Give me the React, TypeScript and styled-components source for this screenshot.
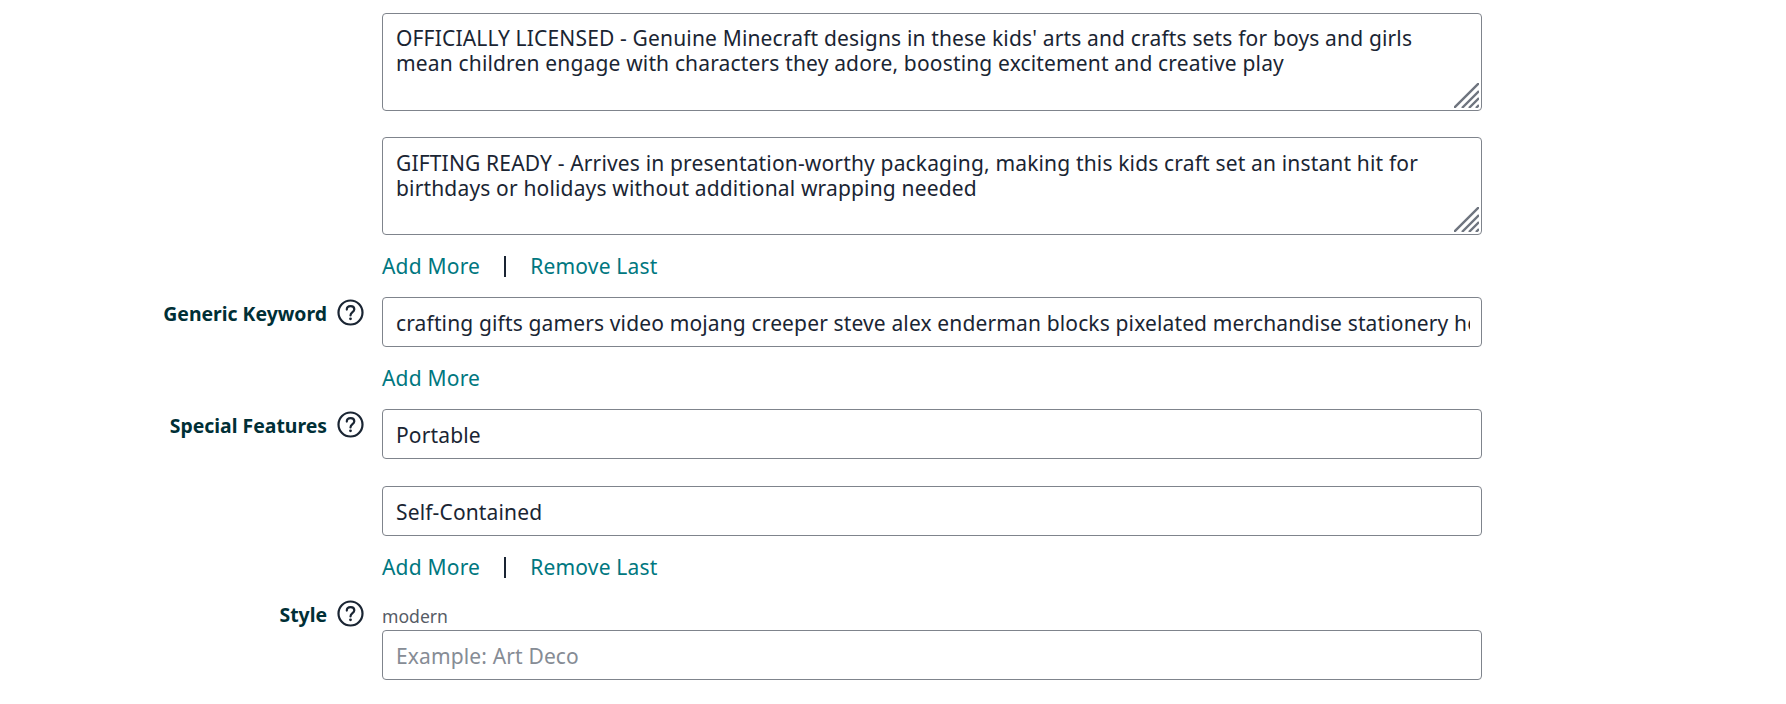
import React from "react";
import styled, { createGlobalStyle } from "styled-components";

const FONT = `"Noto Sans", "Open Sans", sans-serif`;

const Global = createGlobalStyle`
  html, body { margin: 0; padding: 0; background: #fff; }
  body { font-family: ${FONT}; color: #1a2533; }
`;

const Page = styled.main`
  display: flex;
  flex-direction: column;
  width: 1786px;
  height: 704px;
  padding-top: 13px;
  box-sizing: border-box;
  overflow: hidden;
`;

const Row = styled.section`
  display: grid;
  grid-template-columns: 364px 1100px;
  column-gap: 18px;
  align-items: start;
`;

const LabelCell = styled.div<{ $top?: number }>`
  display: flex;
  justify-content: flex-end;
  align-items: center;
  gap: 10px;
  height: 28px;
  margin-top: ${(p) => p.$top ?? 1}px;
  font-size: 19.4px;
  font-weight: 700;
  color: #002f36;
`;

const LabelText = styled.span`
  margin-top: 3px;
  line-height: 26px;
`;

const Fields = styled.div`
  display: flex;
  flex-direction: column;
`;

const AreaWrap = styled.div<{ $gap?: number }>`
  position: relative;
  height: 98px;
  margin-bottom: ${(p) => p.$gap ?? 0}px;
`;

const Area = styled.textarea<{ $padTop: number }>`
  display: block;
  box-sizing: border-box;
  width: 100%;
  height: 100%;
  margin: 0;
  padding: ${(p) => p.$padTop}px 12px 12px 13px;
  border: 1px solid #7f848c;
  border-radius: 4px;
  resize: none;
  outline: none;
  overflow: hidden;
  font: 400 21px/25px ${FONT};
  letter-spacing: 0.16px;
  color: #1a2533;
`;

const Grip = styled.svg`
  position: absolute;
  right: 3px;
  bottom: 3px;
  width: 25px;
  height: 25px;
`;

const Input = styled.input<{ $gap?: number }>`
  display: block;
  box-sizing: border-box;
  width: 100%;
  height: 50px;
  margin: 0 0 ${(p) => p.$gap ?? 0}px;
  padding: 2px 11px 0 13px;
  border: 1px solid #7f848c;
  border-radius: 4px;
  outline: none;
  font: 400 21px ${FONT};
  letter-spacing: 0.14px;
  color: #1a2533;
  &::placeholder { color: #868c95; opacity: 1; }
`;

const Links = styled.div<{ $top: number; $bottom: number }>`
  display: flex;
  align-items: center;
  height: 26px;
  margin: ${(p) => p.$top}px 0 ${(p) => p.$bottom}px;
  font-size: 21px;
  letter-spacing: 0.2px;
  line-height: 26px;
`;

const ActionLink = styled.a`
  color: #007780;
  text-decoration: none;
`;

const Separator = styled.span`
  flex: none;
  width: 2px;
  height: 21px;
  margin: 0 24px;
  background: #1a2433;
`;

const Hint = styled.div`
  height: 31px;
  padding-top: 4px;
  box-sizing: border-box;
  font-size: 17.6px;
  line-height: 26px;
  color: #565c66;
`;

const Help = styled.svg`
  flex: none;
  width: 27px;
  height: 27px;
`;

const HelpIcon = () => (
  <Help viewBox="0 0 27 27" fill="none" stroke="#1a2533" strokeWidth="2.2">
    <circle cx="13.5" cy="13.5" r="12" />
    <path d="M9.8 10.6c0-2.2 1.6-3.5 3.8-3.5s3.7 1.3 3.7 3.2c0 2.9-3.8 2.9-3.8 6.1" strokeLinecap="round" />
    <circle cx="13.5" cy="19.8" r="1.4" fill="#1a2533" stroke="none" />
  </Help>
);

const GripIcon = () => (
  <Grip viewBox="0 0 25 25" stroke="#6f757f" strokeWidth="2.4">
    <path d="M0 25L25 0M8 25L25 8M15 25L25 15M22 25L25 22" />
  </Grip>
);

const LinkPair = ({ top, bottom }: { top: number; bottom: number }) => (
  <Links $top={top} $bottom={bottom}>
    <ActionLink href="#">Add More</ActionLink>
    <Separator />
    <ActionLink href="#">Remove Last</ActionLink>
  </Links>
);

const Label = ({ children, top }: { children: React.ReactNode; top?: number }) => (
  <LabelCell $top={top}>
    <LabelText>{children}</LabelText>
    <HelpIcon />
  </LabelCell>
);

export default function App() {
  return (
    <Page>
      <Global />
      <Row>
        <div />
        <Fields>
          <AreaWrap $gap={26}>
            <Area
              readOnly
              $padTop={12}
              value="OFFICIALLY LICENSED - Genuine Minecraft designs in these kids' arts and crafts sets for boys and girls mean children engage with characters they adore, boosting excitement and creative play"
            />
            <GripIcon />
          </AreaWrap>
          <AreaWrap>
            <Area
              readOnly
              $padTop={13}
              value="GIFTING READY - Arrives in presentation-worthy packaging, making this kids craft set an instant hit for birthdays or holidays without additional wrapping needed"
            />
            <GripIcon />
          </AreaWrap>
          <LinkPair top={18} bottom={18} />
        </Fields>
      </Row>
      <Row>
        <Label>Generic Keyword</Label>
        <Fields>
          <Input readOnly value="crafting gifts gamers video mojang creeper steve alex enderman blocks pixelated merchandise stationery holiday" />
          <Links $top={18} $bottom={18}>
            <ActionLink href="#">Add More</ActionLink>
          </Links>
        </Fields>
      </Row>
      <Row>
        <Label>Special Features</Label>
        <Fields>
          <Input readOnly value="Portable" $gap={27} />
          <Input readOnly value="Self-Contained" />
          <LinkPair top={18} bottom={19} />
        </Fields>
      </Row>
      <Row>
        <Label top={0}>Style</Label>
        <Fields>
          <Hint>modern</Hint>
          <Input readOnly placeholder="Example: Art Deco" />
        </Fields>
      </Row>
    </Page>
  );
}
